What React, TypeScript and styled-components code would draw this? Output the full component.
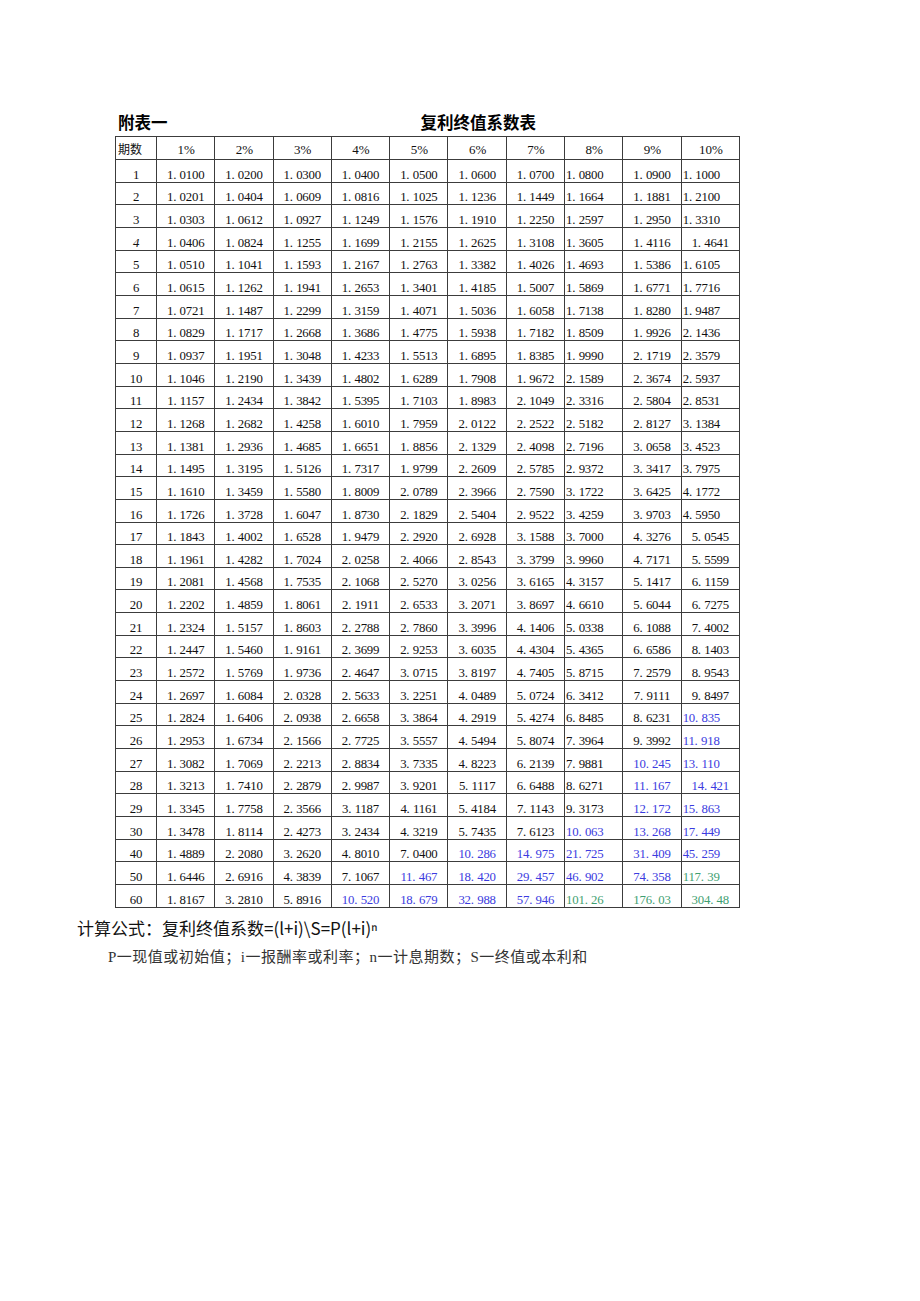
import React from "react";
import styled, { createGlobalStyle } from "styled-components";

const GlobalStyle = createGlobalStyle`
  html, body {
    margin: 0;
    padding: 0;
    background: #fff;
  }
  body {
    font-family: "Liberation Serif", "Noto Sans CJK SC", serif;
    color: #111;
  }
`;

type Align = "left" | "center" | "right";
type Tone = "plain" | "blue" | "green";

const rates = [1, 2, 3, 4, 5, 6, 7, 8, 9, 10];
const periods = [
  1, 2, 3, 4, 5, 6, 7, 8, 9, 10, 11, 12, 13, 14, 15, 16, 17, 18, 19, 20,
  21, 22, 23, 24, 25, 26, 27, 28, 29, 30, 40, 50, 60,
];
// the 10% column is mostly flush left, except these rows
const centeredInTen = [4, 17, 18, 19, 20, 21, 22, 23, 24, 28, 60];
// values printed in the source table that differ from plain rounding
const printed: Record<string, string> = {
  "7-40": "14.975",
};

const toneColors: Record<Tone, string> = {
  plain: "#111",
  blue: "#3b3be0",
  green: "#3f9f72",
};

const Page = styled.div`
  width: 920px;
  min-height: 1301px;
  padding-top: 112px;
  box-sizing: border-box;
`;

const Sheet = styled.div`
  margin-left: 115px;
  width: 624px;
`;

const TitleRow = styled.div`
  display: flex;
  align-items: flex-start;
  height: 24px;
  font-family: "Noto Sans CJK SC", sans-serif;
  font-weight: 700;
  font-size: 16.5px;
  line-height: 20px;
  color: #000;
`;

const Appendix = styled.div`
  padding-left: 3px;
`;

const MainTitle = styled.div`
  margin-left: 253px;
`;

const Table = styled.table`
  width: 624px;
  border-collapse: collapse;
  table-layout: fixed;
`;

const Col = styled.col<{ $w: number }>`
  width: ${(p) => p.$w}px;
`;

const Row = styled.tr<{ $head?: boolean }>`
  height: ${(p) => (p.$head ? 23 : 22.67)}px;
`;

const Cell = styled.td<{ $align: Align; $tone: Tone; $italic?: boolean }>`
  border: 1px solid #3c3c3c;
  padding: 0 1px 0 1px;
  font-size: 12.8px;
  letter-spacing: -0.2px;
  line-height: 14px;
  vertical-align: bottom;
  white-space: nowrap;
  overflow: hidden;
  text-align: ${(p) => p.$align};
  color: ${(p) => toneColors[p.$tone]};
  font-style: ${(p) => (p.$italic ? "italic" : "normal")};
`;

const HeadCell = styled.th<{ $align: Align }>`
  border: 1px solid #3c3c3c;
  padding: 0 1px 2px 2px;
  font-weight: 400;
  font-size: 13px;
  line-height: 14px;
  vertical-align: bottom;
  text-align: ${(p) => p.$align};
  color: #111;
`;

const PeriodLabel = styled.span`
  font-family: "Noto Sans CJK SC", sans-serif;
  font-size: 12px;
`;

const Dot = styled.span`
  display: inline-block;
  width: 0.5em;
  text-align: left;
`;

const Formula = styled.div`
  margin: 8px 0 0 77px;
  font-family: "Noto Sans CJK SC", sans-serif;
  font-size: 17px;
  line-height: 24px;
  color: #111;
`;

const Note = styled.div`
  margin: 7px 0 0 108px;
  font-family: "Liberation Serif", "Noto Sans CJK SC", serif;
  font-size: 15px;
  letter-spacing: 0.5px;
  line-height: 20px;
  color: #333;
`;

function format(v: number): string {
  if (v >= 100) return v.toFixed(2);
  if (v >= 10) return v.toFixed(3);
  return v.toFixed(4);
}

function toneOf(v: number): Tone {
  if (v >= 100) return "green";
  if (v >= 10) return "blue";
  return "plain";
}

function alignOf(rate: number, n: number): Align {
  if (rate === 8) return "left";
  if (rate === 10) return centeredInTen.includes(n) ? "center" : "left";
  return "center";
}

const Factor = ({ text }: { text: string }) => {
  const [whole, frac] = text.split(".");
  return (
    <>
      {whole}
      <Dot>.</Dot>
      {frac}
    </>
  );
};

export default function App() {
  return (
    <Page>
      <GlobalStyle />
      <Sheet>
        <TitleRow>
          <Appendix>附表一</Appendix>
          <MainTitle>复利终值系数表</MainTitle>
        </TitleRow>
        <Table>
          <colgroup>
            <Col $w={41} />
            {rates.map((r) => (
              <Col key={r} $w={58.3} />
            ))}
          </colgroup>
          <thead>
            <Row $head>
              <HeadCell $align="left">
                <PeriodLabel>期数</PeriodLabel>
              </HeadCell>
              {rates.map((r) => (
                <HeadCell key={r} $align="center">
                  {r}%
                </HeadCell>
              ))}
            </Row>
          </thead>
          <tbody>
            {periods.map((n) => (
              <Row key={n}>
                <Cell $align="center" $tone="plain" $italic={n === 4}>
                  {n}
                </Cell>
                {rates.map((r) => {
                  const v = Math.pow(1 + r / 100, n);
                  const text = printed[`${r}-${n}`] ?? format(v);
                  return (
                    <Cell key={r} $align={alignOf(r, n)} $tone={toneOf(v)}>
                      <Factor text={text} />
                    </Cell>
                  );
                })}
              </Row>
            ))}
          </tbody>
        </Table>
      </Sheet>
      <Formula>计算公式：复利终值系数=(l+i)\S=P(l+i)ⁿ</Formula>
      <Note>P一现值或初始值；i一报酬率或利率；n一计息期数；S一终值或本利和</Note>
    </Page>
  );
}
